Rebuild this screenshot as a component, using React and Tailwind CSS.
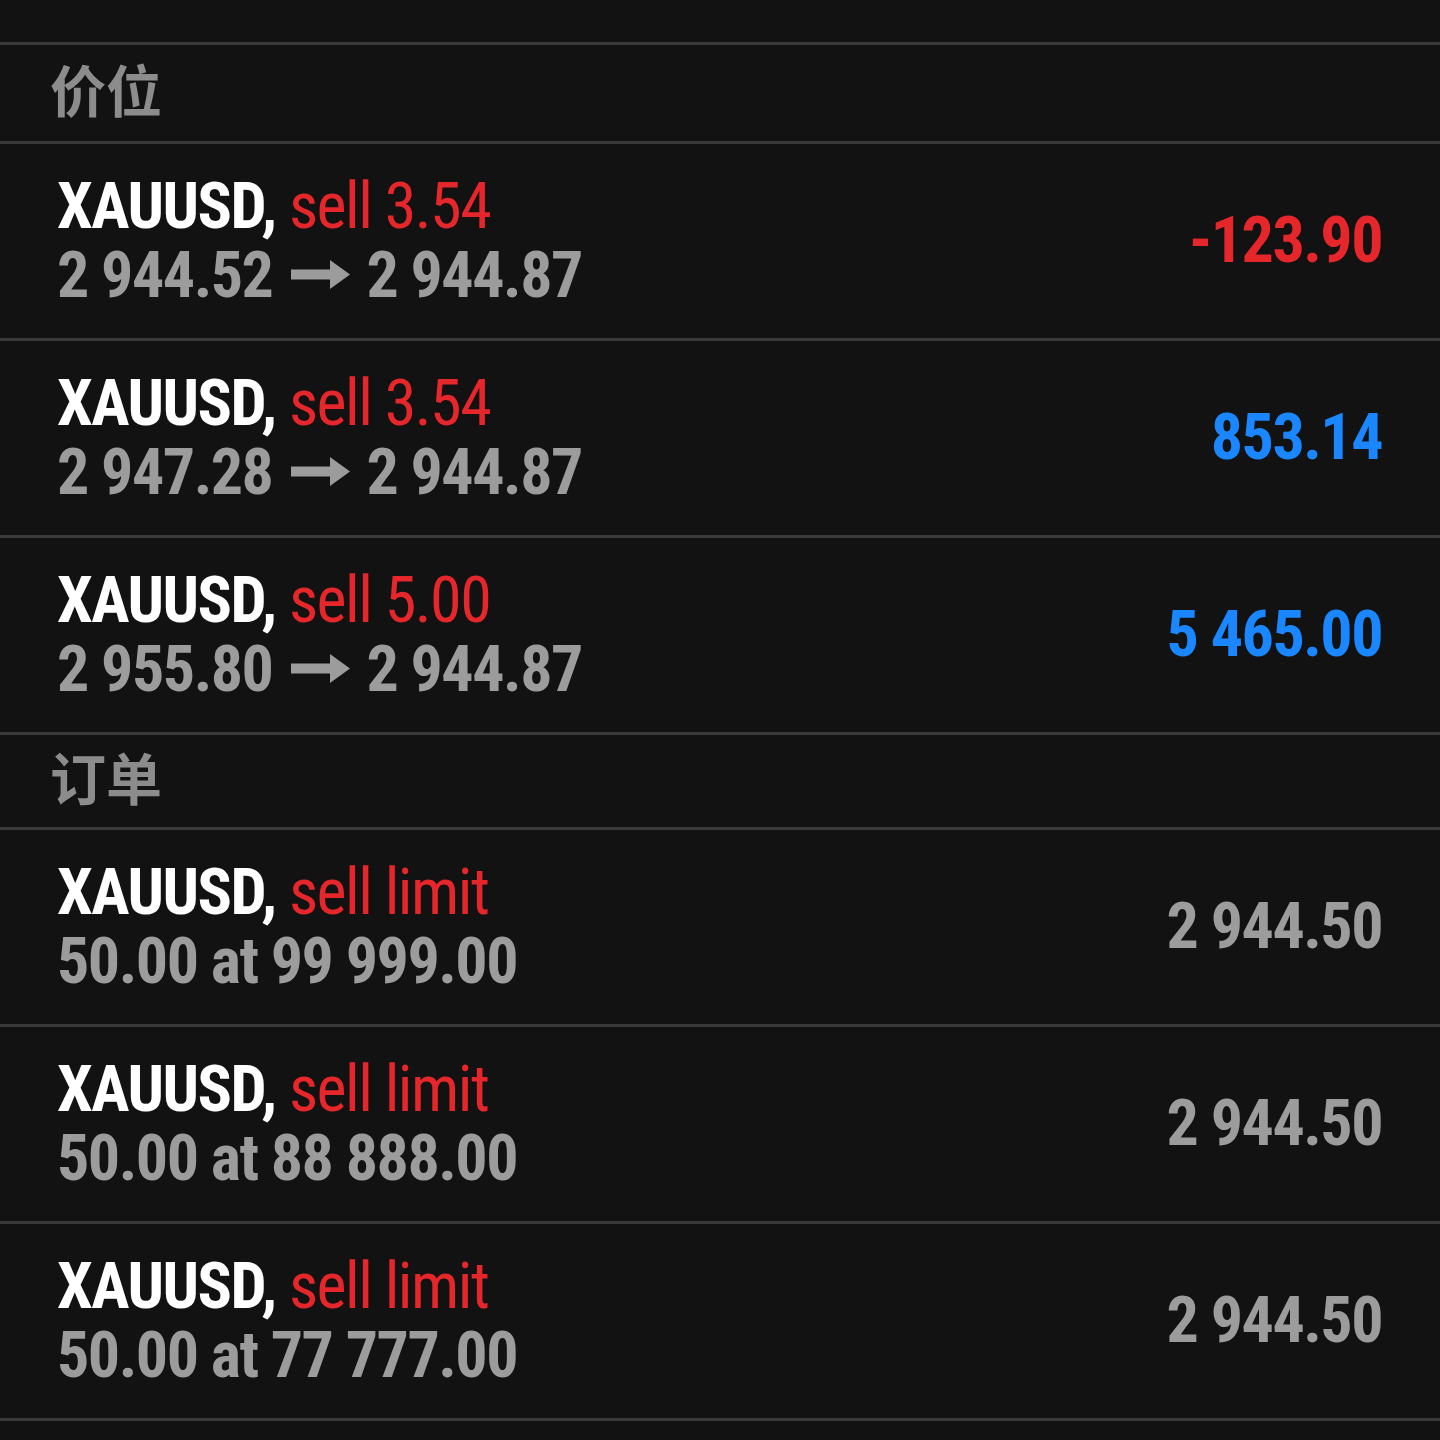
const positions = [
  { sym: "XAUUSD", type: "sell 3.54", open: "2 944.52", close: "2 944.87", profit: "-123.90", color: "text-[#e5262a]" },
  { sym: "XAUUSD", type: "sell 3.54", open: "2 947.28", close: "2 944.87", profit: "853.14", color: "text-[#1a86ff]" },
  { sym: "XAUUSD", type: "sell 5.00", open: "2 955.80", close: "2 944.87", profit: "5 465.00", color: "text-[#1a86ff]" },
];

const orders = [
  { sym: "XAUUSD", type: "sell limit", detail: "50.00 at 99 999.00", price: "2 944.50" },
  { sym: "XAUUSD", type: "sell limit", detail: "50.00 at 88 888.00", price: "2 944.50" },
  { sym: "XAUUSD", type: "sell limit", detail: "50.00 at 77 777.00", price: "2 944.50" },
];

const font = { fontFamily: '"Roboto Condensed", Roboto, "Noto Sans CJK SC", sans-serif' };

function Divider() {
  return <div className="h-[3px] bg-[#3a3a3a]" />;
}

function Arrow() {
  // heavy arrow with a solid triangular head
  return (
    <svg className="ml-[19px] mr-[16px] inline-block" width="59" height="29" viewBox="0 0 59 29" style={{ verticalAlign: "8px" }}>
      <rect x="0" y="9.5" width="41" height="10" fill="#9c9c9c" />
      <polygon points="39,0 59,14.5 39,29" fill="#9c9c9c" />
    </svg>
  );
}

function SectionHeader({ title, h }) {
  return (
    <div className={`flex items-center pl-[50px] ${h}`}>
      <span className="text-[56px] font-bold leading-none text-[#8c8c8c]">{title}</span>
    </div>
  );
}

function Row({ sym, type, second, right, rightColor }) {
  return (
    <div className="flex h-[194px] items-center justify-between pl-[57px] pr-[58px] tracking-[-1.5px]">
      <div className="flex flex-col text-[64px] leading-[69px]">
        <div className="whitespace-nowrap">
          <span className="font-bold text-white">{sym}, </span>
          <span className="text-[#e5262a]">{type}</span>
        </div>
        <div className="whitespace-nowrap font-bold text-[#9c9c9c]">{second}</div>
      </div>
      <div className={`text-[64px] font-bold ${rightColor}`}>{right}</div>
    </div>
  );
}

export default function App() {
  return (
    <div className="h-[1440px] w-[1440px] overflow-hidden bg-[#121212]" style={font}>
      <div className="h-[42px]" />
      <Divider />
      <SectionHeader title="价位" h="h-[96px]" />
      <Divider />
      {positions.map((p, i) => (
        <div key={i}>
          <Row
            sym={p.sym}
            type={p.type}
            second={
              <>
                {p.open}
                <Arrow />
                {p.close}
              </>
            }
            right={p.profit}
            rightColor={p.color}
          />
          <Divider />
        </div>
      ))}
      <SectionHeader title="订单" h="h-[92px]" />
      <Divider />
      {orders.map((o, i) => (
        <div key={i}>
          <Row sym={o.sym} type={o.type} second={o.detail} right={o.price} rightColor="text-[#9c9c9c]" />
          <Divider />
        </div>
      ))}
    </div>
  );
}
